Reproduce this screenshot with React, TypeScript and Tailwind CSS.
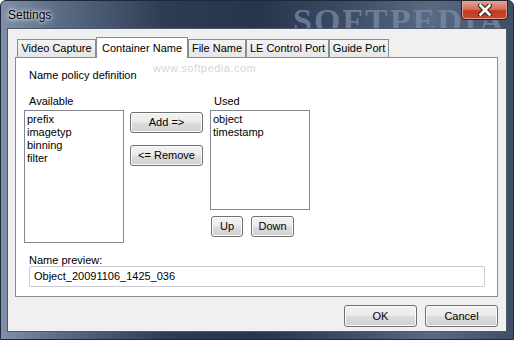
import React from "react";

const tabs = [
  { label: "Video Capture", w: "w-[79px]", active: false },
  { label: "Container Name", w: "w-[92px]", active: true },
  { label: "File Name", w: "w-[58px]", active: false },
  { label: "LE Control Port", w: "w-[83px]", active: false },
  { label: "Guide Port", w: "w-[60px]", active: false },
];

const available = ["prefix", "imagetyp", "binning", "filter"];
const used = ["object", "timestamp"];

// win7 style push button
const Btn = ({ children, className }: { children: React.ReactNode; className: string }) => (
  <button
    className={`flex items-center justify-center rounded-[3px] border border-[#707070] bg-[linear-gradient(#f2f2f2_0%,#ebebeb_48%,#dddddd_52%,#cfcfcf_100%)] text-[11px] leading-none text-black shadow-[inset_0_0_0_1px_#fcfcfc] ${className}`}
  >
    {children}
  </button>
);

const ListBox = ({ items, className }: { items: string[]; className: string }) => (
  <div className={`border border-[#828790] bg-white pl-[2px] pt-[2px] ${className}`}>
    {items.map((it) => (
      <div key={it} className="text-[11px] leading-[13px] text-black">
        {it}
      </div>
    ))}
  </div>
);

const App = () => {
  return (
    <div className="relative flex h-[340px] w-[514px] flex-col overflow-hidden rounded-t-[6px] border border-[#1f2836] bg-[linear-gradient(90deg,#7f90a8_0%,#5a6a84_12%,#2e3b55_32%,#27344d_50%,#3d4c67_68%,#596a84_84%,#3f4e67_100%)] font-['Liberation_Sans',sans-serif]">
      {/* watermark in title bar */}
      <div className="pointer-events-none absolute left-[292px] top-[-6px] font-['Liberation_Serif',serif] text-[34px] font-bold tracking-[2px] text-[#7d8ea8] opacity-70">
        SOFTPEDIA
      </div>

      {/* title bar */}
      <div className="relative flex h-[27px] items-center pl-[7px]">
        <span className="text-[12px] text-black [text-shadow:0_0_6px_#ffffff,0_0_3px_#ffffff]">
          Settings
        </span>
        <div className="absolute right-[5px] top-[-1px] flex h-[20px] w-[47px] items-center justify-center rounded-b-[4px] border border-[#3c1710] bg-[linear-gradient(#e5a293_0%,#d7705c_45%,#c2391f_55%,#c84a2e_100%)] shadow-[inset_0_0_0_1px_#e8a090]">
          <svg width="14" height="12" viewBox="0 0 14 12">
            <path d="M2 1 L12 11 M12 1 L2 11" stroke="#3b2a26" strokeWidth="5" strokeLinecap="square" />
            <path d="M2.5 1.5 L11.5 10.5 M11.5 1.5 L2.5 10.5" stroke="#ffffff" strokeWidth="2.6" strokeLinecap="square" />
          </svg>
        </div>
      </div>

      {/* client area */}
      <div className="relative mx-[6px] mb-[7px] flex flex-1 flex-col border border-[#4b5a6e] bg-[#f0f0f0] pl-[7px] pr-[8px] pt-[8px]">
        {/* tabs */}
        <div className="relative flex h-[20px] items-end pl-[2px]">
          {tabs.map((t) =>
            t.active ? (
              <div
                key={t.label}
                className={`relative z-10 mb-[-1px] flex h-[21px] items-start justify-center border border-b-0 border-[#898c95] bg-white pt-[2px] text-[11px] text-black ${t.w}`}
              >
                {t.label}
              </div>
            ) : (
              <div
                key={t.label}
                className={`flex h-[18px] items-center justify-center border border-b-0 border-[#898c95] bg-[linear-gradient(#f3f3f3,#e6e6e6)] text-[11px] text-black ${t.w}`}
              >
                {t.label}
              </div>
            )
          )}
        </div>

        {/* tab panel */}
        <div className="relative flex h-[240px] flex-col border border-[#898c95] bg-white">
          <div className="pointer-events-none absolute left-[137px] top-[2px] text-[11px] tracking-[0.5px] text-[#d6d6d6]">
            www.softpedia.com
          </div>

          <div className="mt-[11px] pl-[13px] text-[11px] leading-[13px] text-black">
            Name policy definition
          </div>

          <div className="mt-[12px] flex pl-[8px]">
            <div className="flex flex-col">
              <div className="h-[16px] pl-[5px] text-[11px] leading-[14px] text-black">Available</div>
              <ListBox items={available} className="h-[133px] w-[100px]" />
            </div>

            <div className="ml-[6px] flex flex-col pt-[18px]">
              <Btn className="h-[21px] w-[73px]">Add =&gt;</Btn>
              <Btn className="mt-[12px] h-[21px] w-[73px]">&lt;= Remove</Btn>
            </div>

            <div className="ml-[7px] flex flex-col">
              <div className="h-[16px] pl-[4px] text-[11px] leading-[14px] text-black">Used</div>
              <ListBox items={used} className="h-[100px] w-[100px]" />
              <div className="mt-[6px] flex pl-[1px]">
                <Btn className="h-[21px] w-[32px]">Up</Btn>
                <Btn className="ml-[8px] h-[21px] w-[43px]">Down</Btn>
              </div>
            </div>
          </div>

          <div className="mt-[11px] pl-[13px] text-[11px] leading-[12px] text-black">Name preview:</div>
          <div className="ml-[13px] flex h-[21px] w-[456px] items-center rounded-[2px] border border-[#c9cbd0] bg-white pl-[4px] text-[11px] text-black">
            Object_20091106_1425_036
          </div>
        </div>

        {/* dialog buttons */}
        <div className="flex justify-end pt-[8px]">
          <Btn className="h-[22px] w-[73px]">OK</Btn>
          <Btn className="ml-[8px] h-[22px] w-[73px]">Cancel</Btn>
        </div>
      </div>
    </div>
  );
};

export default App;
